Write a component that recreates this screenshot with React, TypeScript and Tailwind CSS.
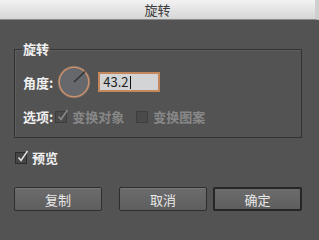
import React from "react";

const FONT = "font-['Noto_Sans_CJK_SC','Noto_Sans',sans-serif]";

function Check({ checked, disabled }: { checked: boolean; disabled?: boolean }) {
  return (
    <span
      className={
        "relative inline-block h-[12px] w-[12px] shrink-0 border " +
        (disabled ? "border-[#3e3e3e] bg-[#4a4a4a]" : "border-[#2c2c2c] bg-[#454545]")
      }
    >
      {checked && (
        <svg
          className="absolute -top-[3px] left-[1px]"
          width="12"
          height="13"
          viewBox="0 0 12 13"
          fill="none"
        >
          <path
            d="M1.5 7.5 L4 10.5 L10.5 1"
            stroke={disabled ? "#8c8c8c" : "#e6e6e6"}
            strokeWidth="1.4"
          />
        </svg>
      )}
    </span>
  );
}

function Dial() {
  return (
    <svg width="34" height="34" viewBox="0 0 34 34" className="shrink-0">
      <circle cx="17" cy="17" r="16" fill="none" stroke="#6e6a66" strokeWidth="1" />
      <circle cx="17" cy="17" r="14.8" fill="#66686b" stroke="#c8906c" strokeWidth="1.6" />
      <line x1="17" y1="17" x2="28" y2="6.5" stroke="#333" strokeWidth="1.6" />
    </svg>
  );
}

function Btn({ label, primary, w }: { label: string; primary?: boolean; w: string }) {
  return (
    <button
      className={
        "h-[24px] rounded-[2px] bg-gradient-to-b from-[#6c6c6c] to-[#5e5e5e] text-[13px] leading-none text-[#e8e8e8] " +
        w +
        (primary
          ? " border-2 border-[#262626]"
          : " border border-[#2e2e2e] shadow-[inset_0_1px_0_#777]")
      }
    >
      {label}
    </button>
  );
}

export default function App() {
  return (
    <div className={"relative h-[240px] w-[319px] overflow-hidden bg-[#535353] " + FONT}>
      <div className="flex h-[20px] items-center justify-center border-b border-[#8a8a8a] border-r-[4px] border-r-[#cfcfcf] bg-gradient-to-b from-[#f2f2f2] to-[#d6d6d6] text-[13px] text-[#3c3c3c]">
        旋转
      </div>

      <div className="px-[14px]">
        <fieldset className="mt-[21px] w-[288px] border border-[#333] px-[8px] pb-[12px] shadow-[inset_1px_1px_0_#5e5e5e]">
          <legend className="ml-[-1px] px-[1px] text-[13px] font-bold leading-[16px] text-[#f0f0f0]">
            旋转
          </legend>

          <div className="mt-[8px] flex items-center">
            <span className="mt-[2px] text-[13px] font-bold text-[#f0f0f0]">角度:</span>
            <span className="ml-[4px]">
              <Dial />
            </span>
            <div className="ml-[7px] flex h-[20px] w-[62px] items-center border-2 border-[#c5875c] bg-[#d2d4d6] pl-[3px] text-[13px] text-[#1e1e1e]">
              <span>43.2</span>
              <span className="ml-[1px] h-[13px] w-px bg-[#111]" />
            </div>
          </div>

          <div className="mt-[10px] flex h-[16px] items-center text-[13px]">
            <span className="font-bold text-[#f0f0f0]">选项:</span>
            <span className="ml-[2px] flex">
              <Check checked disabled />
            </span>
            <span className="ml-[5px] font-bold text-[#888]">变换对象</span>
            <span className="ml-[12px] flex">
              <Check checked={false} disabled />
            </span>
            <span className="ml-[5px] font-bold text-[#888]">变换图案</span>
          </div>
        </fieldset>

        <div className="mt-[12px] flex h-[16px] items-center pl-[1px] text-[13px]">
          <Check checked />
          <span className="ml-[5px] font-bold text-[#f0f0f0]">预览</span>
        </div>

        <div className="mt-[21px] flex">
          <Btn label="复制" w="w-[88px]" />
          <span className="ml-[17px] flex">
            <Btn label="取消" w="w-[88px]" />
          </span>
          <span className="ml-[6px] flex">
            <Btn label="确定" primary w="w-[89px]" />
          </span>
        </div>
      </div>
    </div>
  );
}
